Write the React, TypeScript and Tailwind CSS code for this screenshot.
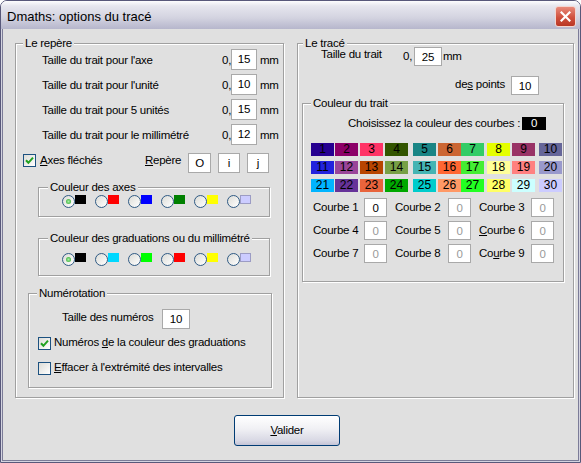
import React from "react";

const grid = [
  ["#260090", "#8c0068", "#ff3366", "#335500", "#1a8585", "#cc6633", "#33cc66", "#e5ff00", "#993366", "#666699"],
  ["#2222dd", "#994499", "#b84400", "#77a045", "#44b4b4", "#ff6633", "#44ee33", "#ffff99", "#ff8080", "#9999cc"],
  ["#00b4ff", "#663399", "#e8643c", "#00a800", "#00cccc", "#ff9966", "#22ff22", "#ffff66", "#ccffff", "#ccccff"],
];

const colMargins = ["", "ml-px", "ml-[2px]", "ml-[2px]", "ml-[5px]", "ml-[2px]", "", "ml-[3px]", "ml-[2px]", "ml-[4px]"];

const axesColors = ["#000000", "#ff0000", "#0000ff", "#008000", "#ffff00", "#ccccff"];
const gradColors = ["#000000", "#00d8ff", "#00ff00", "#ff0000", "#ffff00", "#ccccff"];

const traits = [
  { label: "Taille du trait pour l'axe", value: "15" },
  { label: "Taille du trait pour l'unité", value: "10" },
  { label: "Taille du trait pour 5 unités", value: "15" },
  { label: "Taille du trait pour le millimétré", value: "12" },
];

function Field({ value, className = "", dim = false }: { value: string; className?: string; dim?: boolean }) {
  return (
    <input
      readOnly
      value={value}
      className={`border border-[#a9a9a9] bg-white text-center outline-none ${dim ? "text-[#9a9a9a]" : "text-black"} ${className}`}
    />
  );
}

function Check({ on }: { on: boolean }) {
  return (
    <span className="flex h-[13px] w-[13px] shrink-0 items-center justify-center border border-[#1c5180] bg-[linear-gradient(135deg,#dcdcd7,#ffffff)]">
      {on && (
        <svg width="9" height="9" viewBox="0 0 9 9">
          <path d="M1 4.2 L3.4 6.8 L8 1.6" stroke="#21a121" strokeWidth="2" fill="none" />
        </svg>
      )}
    </span>
  );
}

function Radio({ on, color }: { on: boolean; color: string }) {
  return (
    <div className="flex items-start">
      <span className="flex h-[13px] w-[13px] shrink-0 items-center justify-center rounded-full border border-[#2f5a84] bg-[linear-gradient(135deg,#dcdcd7,#ffffff)]">
        {on && <span className="h-[5px] w-[5px] rounded-full bg-[radial-gradient(circle,#a6f0a6,#21a121)]" />}
      </span>
      <span
        className={`h-[9px] w-[11px] ${color === "#ccccff" ? "border border-[#9c9cc4]" : ""}`}
        style={{ backgroundColor: color }}
      />
    </div>
  );
}

function Group({
  title,
  className = "",
  legend = "",
  children,
}: {
  title: React.ReactNode;
  className?: string;
  legend?: string;
  children: React.ReactNode;
}) {
  return (
    <fieldset className={`border border-[#a0a0a0] shadow-[inset_1px_1px_0_#ffffff,1px_1px_0_#ffffff] ${className}`}>
      <legend className={`bg-[#e0e0e0] px-[2px] leading-[14px] ${legend}`}>{title}</legend>
      {children}
    </fieldset>
  );
}

function LeftPanel() {
  return (
    <Group title="Le repère" legend="ml-[7px]" className="h-[362px] w-[269px] shrink-0">
      <div className="-mt-[2px] pl-[26px]">
        {traits.map((t) => (
          <div key={t.label} className="flex h-[25px] items-center">
            <span className="w-[180px]">{t.label}</span>
            <span className="w-[9px]">0,</span>
            <Field value={t.value} className="mb-[3px] h-[21px] w-[26px]" />
            <span className="ml-[3px]">mm</span>
          </div>
        ))}
      </div>
      <div className="flex h-[25px] items-center pl-[7px]">
        <Check on />
        <span className="ml-[4px] w-[105px]">
          <u>A</u>xes fléchés
        </span>
        <span className="w-[43px]">
          <u>R</u>epère
        </span>
        <Field value="O" className="mt-[5px] h-[20px] w-[23px]" />
        <Field value="i" className="ml-[7px] mt-[5px] h-[20px] w-[22px]" />
        <Field value="j" className="ml-[7px] mt-[5px] h-[20px] w-[22px]" />
      </div>
      <Group title="Couleur des axes" legend="ml-[9px]" className="ml-[22px] mt-[7px] h-[37px] w-[232px]">
        <div className="flex gap-[9px] pl-[23px] pt-[1px]">
          {axesColors.map((c, i) => (
            <Radio key={c} on={i === 0} color={c} />
          ))}
        </div>
      </Group>
      <Group
        title="Couleur des graduations ou du millimétré"
        legend="ml-[9px]"
        className="ml-[22px] mt-[14px] h-[45px] w-[232px]"
      >
        <div className="flex gap-[9px] pl-[23px] pt-[8px]">
          {gradColors.map((c, i) => (
            <Radio key={c} on={i === 0} color={c} />
          ))}
        </div>
      </Group>
      <Group title="Numérotation" legend="ml-[8px]" className="ml-[12px] mt-[10px] h-[102px] w-[244px]">
        <div className="mt-[9px] flex h-[20px] items-center pl-[33px]">
          <span className="mb-[3px] w-[100px]">Taille des numéros</span>
          <Field value="10" className="h-[20px] w-[28px]" />
        </div>
        <div className="mt-[6px] flex h-[16px] items-center pl-[9px]">
          <Check on />
          <span className="ml-[3px]">
            Numéros <u>d</u>e la couleur des graduations
          </span>
        </div>
        <div className="mt-[9px] flex h-[16px] items-center pl-[9px]">
          <Check on={false} />
          <span className="ml-[3px]">
            <u>E</u>ffacer à l'extrémité des intervalles
          </span>
        </div>
      </Group>
    </Group>
  );
}

function RightPanel() {
  const courbes = [
    [1, 2, 3],
    [4, 5, 6],
    [7, 8, 9],
  ];
  const labelW = ["w-[51px]", "w-[53px]", "w-[52px]"];
  const courbeLabel = (n: number) => {
    if (n === 6)
      return (
        <>
          <u>C</u>ourbe 6
        </>
      );
    if (n === 9)
      return (
        <>
          Co<u>u</u>rbe 9
        </>
      );
    return `Courbe ${n}`;
  };
  return (
    <Group title="Le tracé" legend="ml-[5px]" className="ml-[13px] h-[362px] w-[277px] shrink-0">
      <div className="-mt-[3px] flex h-[19px] items-center pl-[23px]">
        <span className="mb-[4px] w-[82px]">Taille du trait</span>
        <span className="w-[11px]">0,</span>
        <Field value="25" className="h-[19px] w-[28px]" />
        <span className="ml-[1px]">mm</span>
      </div>
      <div className="mt-[10px] flex h-[19px] items-center justify-end pr-[34px]">
        <span className="mb-[2px]">
          de<u>s</u> points
        </span>
        <Field value="10" className="ml-[6px] h-[19px] w-[28px]" />
      </div>
      <Group title="Couleur du trait" legend="ml-[8px]" className="ml-[4px] mt-[1px] h-[186px] w-[262px]">
        <div className="mt-[7px] flex h-[13px] items-center">
          <span className="whitespace-nowrap pl-[45px]">Choisissez la couleur des courbes :</span>
          <span className="ml-auto mr-[17px] h-[13px] w-[24px] shrink-0 bg-black text-center leading-[13px] text-white">
            0
          </span>
        </div>
        <div className="mt-[13px] flex flex-col gap-[5px] pl-[8px]">
          {grid.map((row, r) => (
            <div key={r} className="flex">
              {row.map((c, i) => (
                <span
                  key={i}
                  className={`h-[13px] w-[23px] text-center text-[12px] leading-[13px] tracking-normal text-black ${colMargins[i]}`}
                  style={{ backgroundColor: c }}
                >
                  {r * 10 + i + 1}
                </span>
              ))}
            </div>
          ))}
        </div>
        <div className="mt-[6px] flex flex-col gap-[4px] pl-[10px]">
          {courbes.map((row) => (
            <div key={row[0]} className="flex h-[19px] items-center">
              {row.map((n, i) => (
                <div key={n} className={`flex items-center ${i > 0 ? "ml-[8px]" : ""}`}>
                  <span className={labelW[i]}>{courbeLabel(n)}</span>
                  <Field value="0" dim={n !== 1} className="h-[19px] w-[23px]" />
                </div>
              ))}
            </div>
          ))}
        </div>
      </Group>
    </Group>
  );
}

export default function App() {
  return (
    <div className="h-[463px] w-[581px] bg-white font-['Liberation_Sans',Arial,sans-serif] text-[11.5px] tracking-[-0.25px] text-black">
      <div className="flex h-full w-full flex-col overflow-hidden rounded-t-[7px] border border-[#58587a]">
        <div className="flex h-[28px] shrink-0 items-center bg-[linear-gradient(to_bottom,#fdfdfe,#e6e6ee_18%,#d3d3e0_60%,#b6b6cc)] pl-[6px] pr-[4px] pt-[3px]">
          <span className="text-[13px] tracking-normal text-black">Dmaths: options du tracé</span>
          <span className="ml-auto flex h-[21px] w-[21px] items-center justify-center rounded-[3px] border border-[#f3d5d0] bg-[linear-gradient(to_bottom,#e88a7a,#d0503e_55%,#b93624)]">
            <svg width="11" height="11" viewBox="0 0 11 11">
              <path d="M1.5 1.5 L9.5 9.5 M9.5 1.5 L1.5 9.5" stroke="#ffffff" strokeWidth="2.2" strokeLinecap="square" />
            </svg>
          </span>
        </div>
        <div className="flex flex-1 flex-col border-x border-b border-[#d4d4e0]">
          <div className="flex flex-1 flex-col border-x border-b border-[#7c7c98] bg-[#e0e0e0]">
            <div className="flex pl-[12px] pt-[7px]">
              <LeftPanel />
              <RightPanel />
            </div>
            <button className="ml-[231px] mt-[17px] h-[31px] w-[106px] rounded-[3px] border border-[#003c74] bg-[linear-gradient(to_bottom,#ffffff,#f0f0f4_45%,#d8d8e4_85%,#c4c4d6)] text-[11.5px]">
              <u>V</u>alider
            </button>
          </div>
        </div>
      </div>
    </div>
  );
}
